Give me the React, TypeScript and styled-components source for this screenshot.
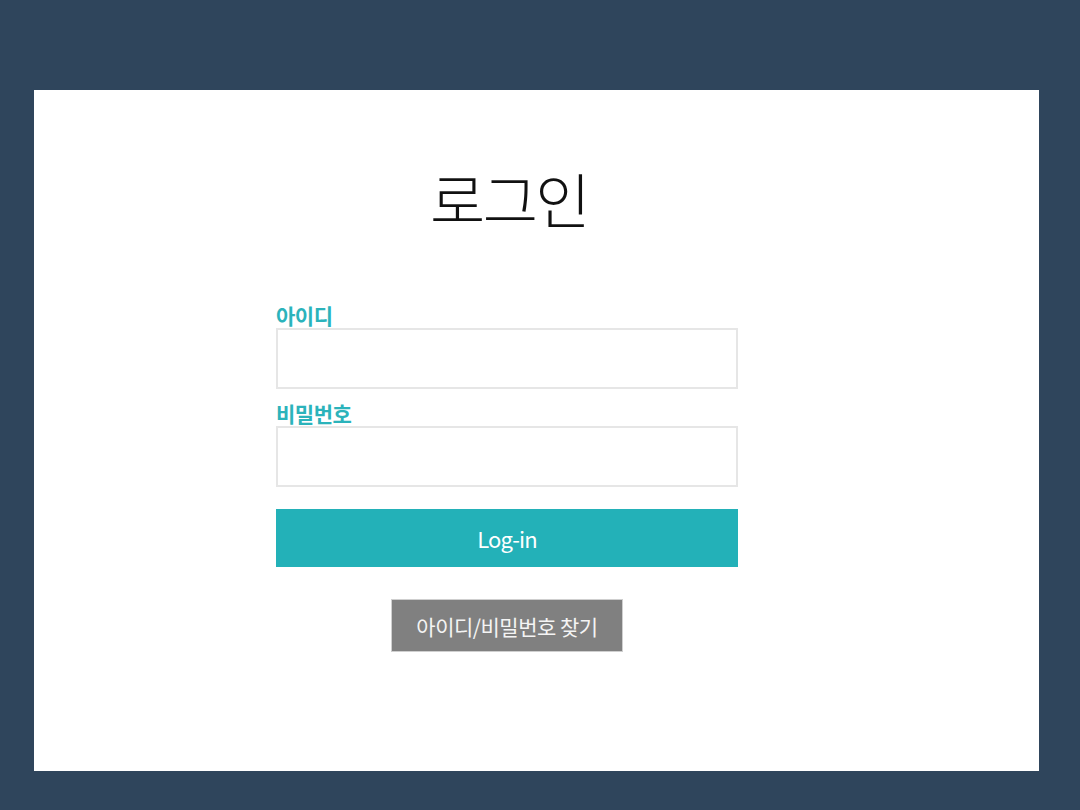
import React from "react";
import styled, { createGlobalStyle } from "styled-components";

const GlobalStyle = createGlobalStyle`
  html, body {
    margin: 0;
    padding: 0;
    background: #2f455c;
    font-family: "Noto Sans CJK KR", "Noto Sans", sans-serif;
  }
`;

// Fond de page
const Page = styled.div`
  height: 810px;
  padding: 90px 41px 39px 34px;
  box-sizing: border-box;
`;

// Carte blanche
const Card = styled.main`
  background: #fff;
  height: 100%;
  padding: 0 0 0 242px;
  box-sizing: border-box;
`;

const Column = styled.div`
  width: 462px;
  display: flex;
  flex-direction: column;
  align-items: stretch;
`;

const Title = styled.h1`
  margin: 68px 0 0;
  font-size: 60px;
  font-weight: 300;
  line-height: 80px;
  color: #111;
  text-align: center;
  letter-spacing: -2.5px;
  padding-left: 4px;
`;

const Form = styled.form`
  display: flex;
  flex-direction: column;
  margin-top: 64px;
`;

const Label = styled.label`
  font-size: 21px;
  font-weight: 700;
  color: #2bb3bb;
  line-height: 26px;
  letter-spacing: -0.5px;
`;

const Input = styled.input`
  height: 61px;
  box-sizing: border-box;
  border: 2px solid #e6e6e6;
  margin: 0 0 11px;
  padding: 0 12px;
  font-size: 18px;
  outline: none;
`;

const LoginButton = styled.button`
  margin-top: 11px;
  height: 58px;
  border: none;
  background: #23b1b8;
  color: #fff;
  font-family: "Noto Sans CJK KR", "Noto Sans", sans-serif;
  font-size: 22px;
  font-weight: 400;
  letter-spacing: -0.8px;
  cursor: pointer;
`;

const FindButton = styled.button`
  align-self: center;
  margin-top: 32px;
  width: 232px;
  height: 53px;
  border: 1px solid #cfcfcf;
  background: #808080;
  color: #f4f4f4;
  font-family: "Noto Sans CJK KR", "Noto Sans", sans-serif;
  font-size: 21px;
  letter-spacing: -0.5px;
  cursor: pointer;
`;

export default function App() {
  return (
    <>
      <GlobalStyle />
      <Page>
        <Card>
          <Column>
            <Title>로그인</Title>
            <Form onSubmit={(e) => e.preventDefault()}>
              <Label htmlFor="uid">아이디</Label>
              <Input id="uid" type="text" />
              <Label htmlFor="upw">비밀번호</Label>
              <Input id="upw" type="password" />
              <LoginButton type="submit">Log-in</LoginButton>
              <FindButton type="button">아이디/비밀번호 찾기</FindButton>
            </Form>
          </Column>
        </Card>
      </Page>
    </>
  );
}
